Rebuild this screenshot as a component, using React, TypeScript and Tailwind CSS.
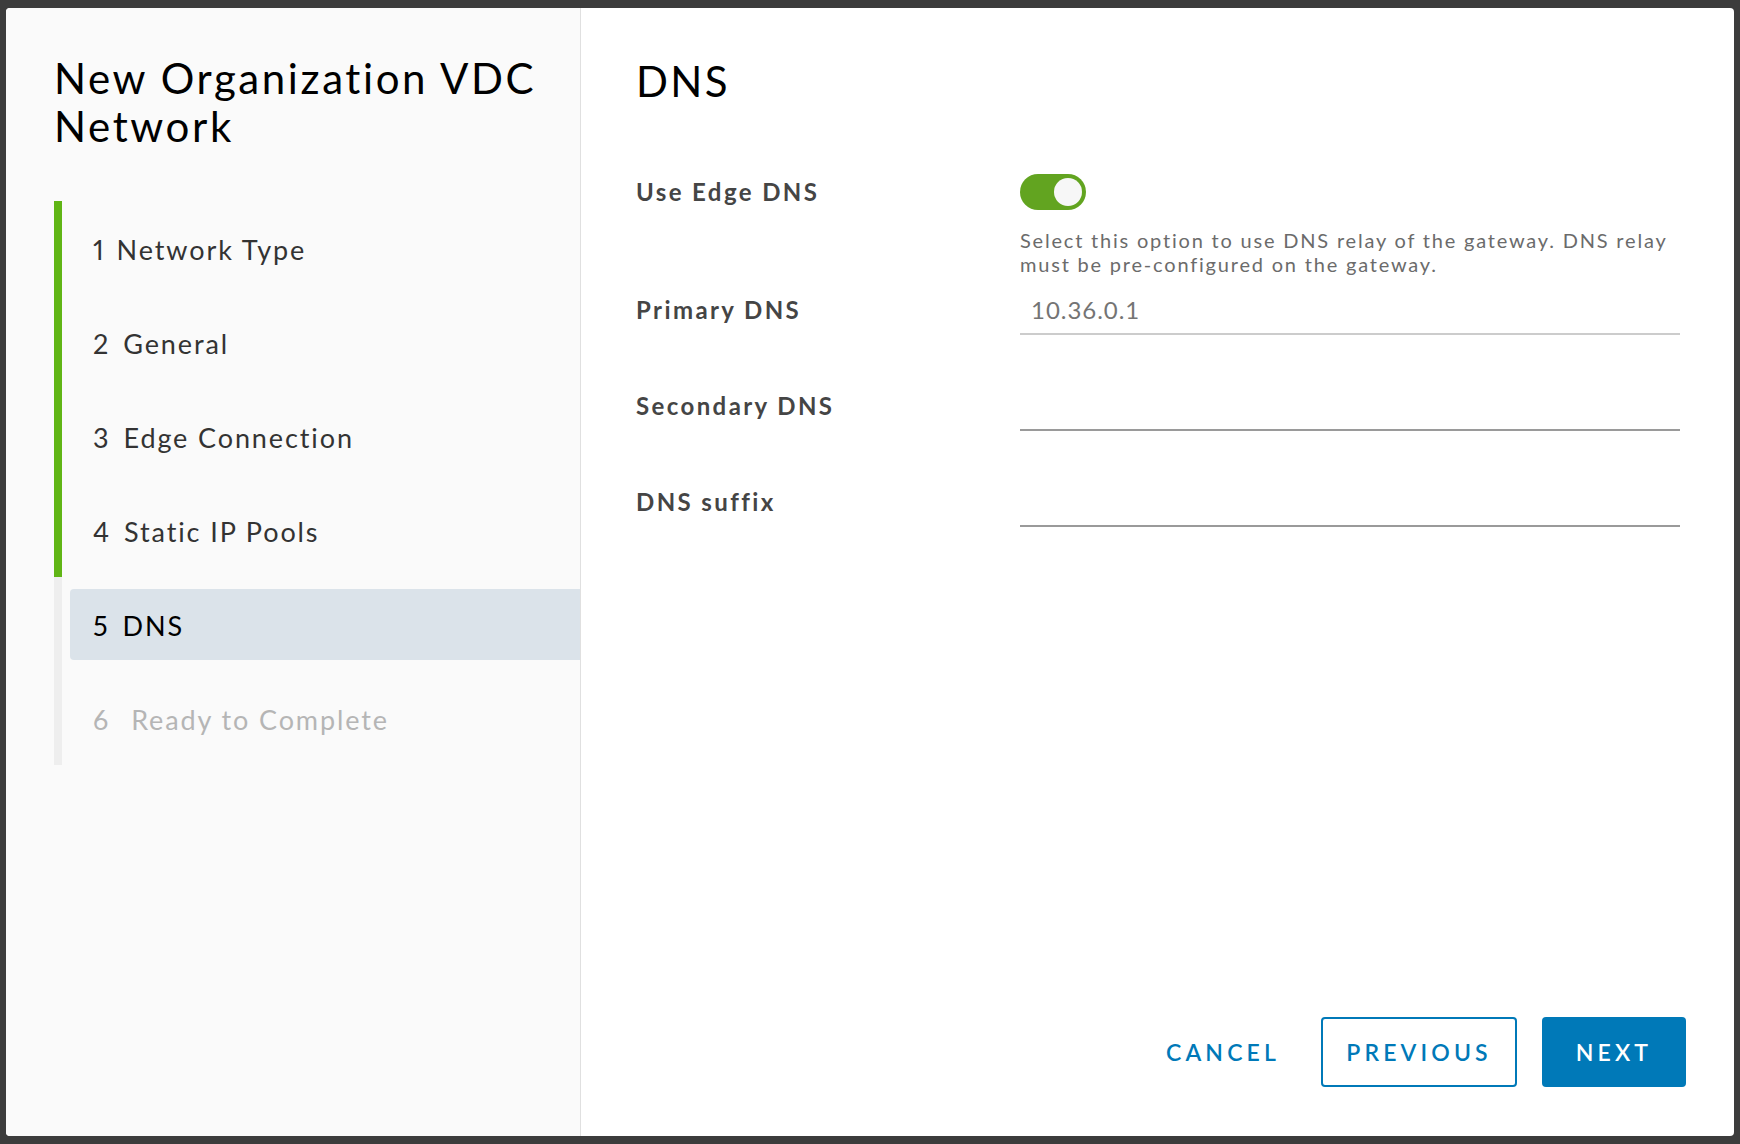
import { useState } from "react";

const steps = [
  { num: 1, label: "Network Type", done: true, gap: "ml-[11px]" },
  { num: 2, label: "General", done: true, gap: "ml-[13px]" },
  { num: 3, label: "Edge Connection", done: true, gap: "ml-[13px]" },
  { num: 4, label: "Static IP Pools", done: true, gap: "ml-[13px]" },
  { num: 5, label: "DNS", active: true, gap: "ml-[13px]" },
  { num: 6, label: "Ready to Complete", disabled: true, gap: "ml-[21px]" },
];

function Toggle({ on, onChange }: { on: boolean; onChange: (v: boolean) => void }) {
  return (
    <button
      type="button"
      onClick={() => onChange(!on)}
      className={
        "relative h-[36px] w-[66px] rounded-full " +
        (on ? "bg-[#62a420]" : "bg-[#9a9a9a]")
      }
    >
      <span
        className={
          "absolute top-[4px] h-[28px] w-[28px] rounded-full bg-[#f7f7f7] " +
          (on ? "left-[34px]" : "left-[4px]")
        }
      />
    </button>
  );
}

export default function App() {
  const [useEdge, setUseEdge] = useState(true);
  const [secondary, setSecondary] = useState("");
  const [suffix, setSuffix] = useState("");

  return (
    <div className="flex h-screen w-screen bg-[#3c3c3c] px-[6px] py-[8px] font-['Lato',sans-serif]">
      <div className="flex flex-1 overflow-hidden rounded-[4px] bg-white">
        {/* wizard nav */}
        <div className="w-[575px] shrink-0 border-r border-[#e0e0e0] bg-[#fafafa] pl-[48px] pt-[46px]">
          <h1 className="text-[42px] leading-[48px] tracking-[0.062em] text-black">
            New Organization VDC
            <br />
            Network
          </h1>

          <ul className="mt-[51px]">
            {steps.map((step) => (
              <li
                key={step.num}
                className={
                  "h-[94px] border-l-[8px] pl-[8px] pt-[12px] " +
                  (step.done ? "border-[#60b515]" : "border-[#eeeeee]")
                }
              >
                <div
                  className={
                    "flex h-[71px] items-center rounded-l-[4px] pl-[23px] pt-[4px] text-[27px] tracking-[0.07em] proportional-nums " +
                    (step.active
                      ? "bg-[#dbe3ea] text-black"
                      : step.disabled
                        ? "text-[#b5b5b5]"
                        : "text-[#333333]")
                  }
                >
                  <span>{step.num}</span>
                  <span className={step.gap}>{step.label}</span>
                </div>
              </li>
            ))}
          </ul>
        </div>

        {/* step content */}
        <div className="flex flex-1 flex-col pl-[55px] pr-[54px] pt-[49px]">
          <h2 className="text-[42px] leading-[48px] tracking-[0.055em] text-black">DNS</h2>

          <div className="mt-[69px] grid grid-cols-[384px_1fr]">
            <div className="text-[24px] font-bold leading-[36px] tracking-[0.1em] text-[#454545]">
              Use Edge DNS
            </div>
            <div>
              <Toggle on={useEdge} onChange={setUseEdge} />
              <p className="mt-[12px] text-[20px] leading-[24px] tracking-[0.09em] text-[#6b6b6b]">
                Select this option to use DNS relay of the gateway. DNS relay
                <br />
                must be pre-configured on the gateway.
              </p>
            </div>
          </div>

          <div className="mt-[9px] grid grid-cols-[384px_1fr] items-center">
            <label className="text-[24px] font-bold tracking-[0.1em] text-[#454545]">
              Primary DNS
            </label>
            <input
              value="10.36.0.1"
              readOnly
              className="h-[50px] border-b-2 border-[#cccccc] bg-transparent px-[11px] text-[24px] tracking-[0.04em] text-[#747474] outline-none"
            />
          </div>

          <div className="mt-[46px] grid grid-cols-[384px_1fr] items-center">
            <label className="text-[24px] font-bold tracking-[0.1em] text-[#454545]">
              Secondary DNS
            </label>
            <input
              value={secondary}
              onChange={(e) => setSecondary(e.target.value)}
              className="h-[50px] border-b-2 border-[#9a9a9a] bg-transparent px-[11px] text-[24px] text-[#333] outline-none"
            />
          </div>

          <div className="mt-[46px] grid grid-cols-[384px_1fr] items-center">
            <label className="text-[24px] font-bold tracking-[0.1em] text-[#454545]">
              DNS suffix
            </label>
            <input
              value={suffix}
              onChange={(e) => setSuffix(e.target.value)}
              className="h-[50px] border-b-2 border-[#9a9a9a] bg-transparent px-[11px] text-[24px] text-[#333] outline-none"
            />
          </div>

          <div className="mt-auto flex items-center justify-end pb-[49px]">
            <button className="h-[70px] px-[26px] text-[23px] font-semibold tracking-[0.18em] text-[#0079b8]">
              CANCEL
            </button>
            <button className="ml-[15px] h-[70px] w-[196px] rounded-[4px] border-2 border-[#0079b8] text-[23px] font-semibold tracking-[0.18em] text-[#0079b8]">
              PREVIOUS
            </button>
            <button className="mr-[-6px] ml-[25px] h-[70px] w-[144px] rounded-[4px] bg-[#0079b8] text-[23px] font-semibold tracking-[0.18em] text-white">
              NEXT
            </button>
          </div>
        </div>
      </div>
    </div>
  );
}
